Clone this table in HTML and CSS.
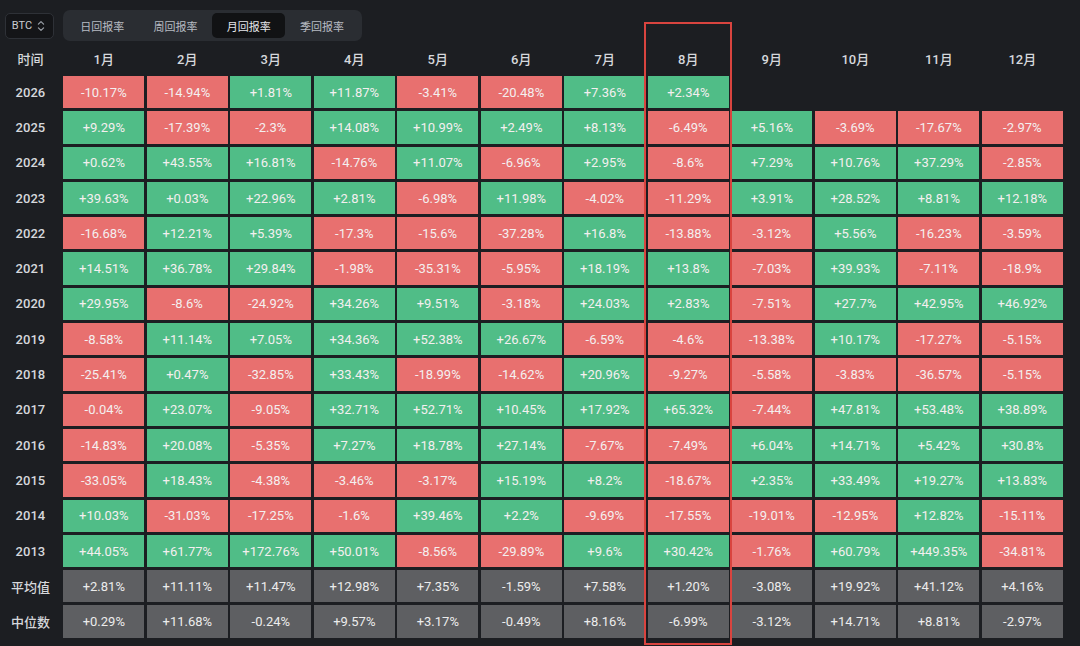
FILE: index.html
```html
<!DOCTYPE html>
<html lang="zh-CN">
<head>
<meta charset="utf-8">
<title>BTC 月回报率</title>
<link rel="stylesheet" href="styles.css">
</head>
<body>
<div class="page">
  <div class="toolbar">
    <div class="select">
      <span>BTC</span>
      <svg class="chev" width="8" height="12" viewBox="0 0 8 12"><path d="M1.4 4.2 L4 1.6 L6.6 4.2 M1.4 7.8 L4 10.4 L6.6 7.8" fill="none" stroke="#9aa0a8" stroke-width="1.2" stroke-linecap="round" stroke-linejoin="round"/></svg>
    </div>
    <div class="tabs">
      <div class="tab">日回报率</div>
      <div class="tab">周回报率</div>
      <div class="tab active">月回报率</div>
      <div class="tab">季回报率</div>
    </div>
  </div>

  <div class="grid">
    <div class="hd">时间</div><div class="hd">1月</div><div class="hd">2月</div><div class="hd">3月</div><div class="hd">4月</div><div class="hd">5月</div><div class="hd">6月</div><div class="hd">7月</div><div class="hd">8月</div><div class="hd">9月</div><div class="hd">10月</div><div class="hd">11月</div><div class="hd">12月</div>

    <div class="yr">2026</div><div class="c r">-10.17%</div><div class="c r">-14.94%</div><div class="c g">+1.81%</div><div class="c g">+11.87%</div><div class="c r">-3.41%</div><div class="c r">-20.48%</div><div class="c g">+7.36%</div><div class="c g">+2.34%</div><div class="c"></div><div class="c"></div><div class="c"></div><div class="c"></div>

    <div class="yr">2025</div><div class="c g">+9.29%</div><div class="c r">-17.39%</div><div class="c r">-2.3%</div><div class="c g">+14.08%</div><div class="c g">+10.99%</div><div class="c g">+2.49%</div><div class="c g">+8.13%</div><div class="c r">-6.49%</div><div class="c g">+5.16%</div><div class="c r">-3.69%</div><div class="c r">-17.67%</div><div class="c r">-2.97%</div>

    <div class="yr">2024</div><div class="c g">+0.62%</div><div class="c g">+43.55%</div><div class="c g">+16.81%</div><div class="c r">-14.76%</div><div class="c g">+11.07%</div><div class="c r">-6.96%</div><div class="c g">+2.95%</div><div class="c r">-8.6%</div><div class="c g">+7.29%</div><div class="c g">+10.76%</div><div class="c g">+37.29%</div><div class="c r">-2.85%</div>

    <div class="yr">2023</div><div class="c g">+39.63%</div><div class="c g">+0.03%</div><div class="c g">+22.96%</div><div class="c g">+2.81%</div><div class="c r">-6.98%</div><div class="c g">+11.98%</div><div class="c r">-4.02%</div><div class="c r">-11.29%</div><div class="c g">+3.91%</div><div class="c g">+28.52%</div><div class="c g">+8.81%</div><div class="c g">+12.18%</div>

    <div class="yr">2022</div><div class="c r">-16.68%</div><div class="c g">+12.21%</div><div class="c g">+5.39%</div><div class="c r">-17.3%</div><div class="c r">-15.6%</div><div class="c r">-37.28%</div><div class="c g">+16.8%</div><div class="c r">-13.88%</div><div class="c r">-3.12%</div><div class="c g">+5.56%</div><div class="c r">-16.23%</div><div class="c r">-3.59%</div>

    <div class="yr">2021</div><div class="c g">+14.51%</div><div class="c g">+36.78%</div><div class="c g">+29.84%</div><div class="c r">-1.98%</div><div class="c r">-35.31%</div><div class="c r">-5.95%</div><div class="c g">+18.19%</div><div class="c g">+13.8%</div><div class="c r">-7.03%</div><div class="c g">+39.93%</div><div class="c r">-7.11%</div><div class="c r">-18.9%</div>

    <div class="yr">2020</div><div class="c g">+29.95%</div><div class="c r">-8.6%</div><div class="c r">-24.92%</div><div class="c g">+34.26%</div><div class="c g">+9.51%</div><div class="c r">-3.18%</div><div class="c g">+24.03%</div><div class="c g">+2.83%</div><div class="c r">-7.51%</div><div class="c g">+27.7%</div><div class="c g">+42.95%</div><div class="c g">+46.92%</div>

    <div class="yr">2019</div><div class="c r">-8.58%</div><div class="c g">+11.14%</div><div class="c g">+7.05%</div><div class="c g">+34.36%</div><div class="c g">+52.38%</div><div class="c g">+26.67%</div><div class="c r">-6.59%</div><div class="c r">-4.6%</div><div class="c r">-13.38%</div><div class="c g">+10.17%</div><div class="c r">-17.27%</div><div class="c r">-5.15%</div>

    <div class="yr">2018</div><div class="c r">-25.41%</div><div class="c g">+0.47%</div><div class="c r">-32.85%</div><div class="c g">+33.43%</div><div class="c r">-18.99%</div><div class="c r">-14.62%</div><div class="c g">+20.96%</div><div class="c r">-9.27%</div><div class="c r">-5.58%</div><div class="c r">-3.83%</div><div class="c r">-36.57%</div><div class="c r">-5.15%</div>

    <div class="yr">2017</div><div class="c r">-0.04%</div><div class="c g">+23.07%</div><div class="c r">-9.05%</div><div class="c g">+32.71%</div><div class="c g">+52.71%</div><div class="c g">+10.45%</div><div class="c g">+17.92%</div><div class="c g">+65.32%</div><div class="c r">-7.44%</div><div class="c g">+47.81%</div><div class="c g">+53.48%</div><div class="c g">+38.89%</div>

    <div class="yr">2016</div><div class="c r">-14.83%</div><div class="c g">+20.08%</div><div class="c r">-5.35%</div><div class="c g">+7.27%</div><div class="c g">+18.78%</div><div class="c g">+27.14%</div><div class="c r">-7.67%</div><div class="c r">-7.49%</div><div class="c g">+6.04%</div><div class="c g">+14.71%</div><div class="c g">+5.42%</div><div class="c g">+30.8%</div>

    <div class="yr">2015</div><div class="c r">-33.05%</div><div class="c g">+18.43%</div><div class="c r">-4.38%</div><div class="c r">-3.46%</div><div class="c r">-3.17%</div><div class="c g">+15.19%</div><div class="c g">+8.2%</div><div class="c r">-18.67%</div><div class="c g">+2.35%</div><div class="c g">+33.49%</div><div class="c g">+19.27%</div><div class="c g">+13.83%</div>

    <div class="yr">2014</div><div class="c g">+10.03%</div><div class="c r">-31.03%</div><div class="c r">-17.25%</div><div class="c r">-1.6%</div><div class="c g">+39.46%</div><div class="c g">+2.2%</div><div class="c r">-9.69%</div><div class="c r">-17.55%</div><div class="c r">-19.01%</div><div class="c r">-12.95%</div><div class="c g">+12.82%</div><div class="c r">-15.11%</div>

    <div class="yr">2013</div><div class="c g">+44.05%</div><div class="c g">+61.77%</div><div class="c g">+172.76%</div><div class="c g">+50.01%</div><div class="c r">-8.56%</div><div class="c r">-29.89%</div><div class="c g">+9.6%</div><div class="c g">+30.42%</div><div class="c r">-1.76%</div><div class="c g">+60.79%</div><div class="c g">+449.35%</div><div class="c r">-34.81%</div>

    <div class="yr cjk">平均值</div><div class="c n">+2.81%</div><div class="c n">+11.11%</div><div class="c n">+11.47%</div><div class="c n">+12.98%</div><div class="c n">+7.35%</div><div class="c n">-1.59%</div><div class="c n">+7.58%</div><div class="c n">+1.20%</div><div class="c n">-3.08%</div><div class="c n">+19.92%</div><div class="c n">+41.12%</div><div class="c n">+4.16%</div>

    <div class="yr cjk">中位数</div><div class="c n">+0.29%</div><div class="c n">+11.68%</div><div class="c n">-0.24%</div><div class="c n">+9.57%</div><div class="c n">+3.17%</div><div class="c n">-0.49%</div><div class="c n">+8.16%</div><div class="c n">-6.99%</div><div class="c n">-3.12%</div><div class="c n">+14.71%</div><div class="c n">+8.81%</div><div class="c n">-2.97%</div>
  </div>

  <div class="highlight"></div>
</div>
</body>
</html>
```

FILE: styles.css
```css
html, body {
  margin: 0;
  padding: 0;
  background: #1c1e22;
}

body {
  width: 1080px;
  height: 646px;
  overflow: hidden;
  font-family: Roboto, "Noto Sans CJK SC", "Noto Sans", sans-serif;
  color: #d8dade;
}

.page {
  position: relative;
  width: 1080px;
  height: 646px;
}

.toolbar {
  display: flex;
  align-items: center;
  gap: 9px;
  padding: 10px 0 0 5px;
  height: 31px;
}

.select {
  box-sizing: border-box;
  width: 49px;
  height: 26px;
  border: 1px solid #2e3137;
  border-radius: 5px;
  background: #141518;
  display: flex;
  align-items: center;
  justify-content: center;
  gap: 5px;
  font-size: 11px;
  color: #c9ccd2;
  padding-right: 2px;
}

.chev {
  display: block;
}

.tabs {
  box-sizing: border-box;
  height: 31px;
  width: 299px;
  display: flex;
  align-items: center;
  padding: 0 3px 0 2.5px;
  background: #2a2d32;
  border-radius: 7px;
}

.tab {
  width: 73.3px;
  height: 25px;
  display: flex;
  align-items: center;
  justify-content: center;
  font-size: 11px;
  color: #b7bbc2;
  border-radius: 5px;
}

.tab.active {
  background: #111214;
  color: #e4e6ea;
}

.grid {
  display: grid;
  grid-template-columns: 60.8px repeat(12, 81px);
  grid-template-rows: 30px repeat(16, 32.3px);
  column-gap: 2.5px;
  row-gap: 3px;
  margin-top: 2px;
}

.hd {
  display: flex;
  align-items: center;
  justify-content: center;
  font-size: 13px;
  font-weight: 500;
  color: #d6d8dc;
}

.yr {
  display: flex;
  align-items: center;
  justify-content: center;
  font-size: 13px;
  font-weight: 500;
  color: #d6d8dc;
}

.yr.cjk {
  font-size: 13px;
}

.c {
  display: flex;
  align-items: center;
  justify-content: center;
  font-size: 13px;
  color: #f4efef;
}

.c.r {
  background: #e8706f;
}

.c.g {
  background: #50bd87;
}

.c.n {
  background: #5e5f62;
  color: #ececec;
}

.highlight {
  position: absolute;
  left: 644px;
  top: 22px;
  width: 88px;
  height: 623px;
  box-sizing: border-box;
  border: 2px solid #d9443f;
  pointer-events: none;
}
```
